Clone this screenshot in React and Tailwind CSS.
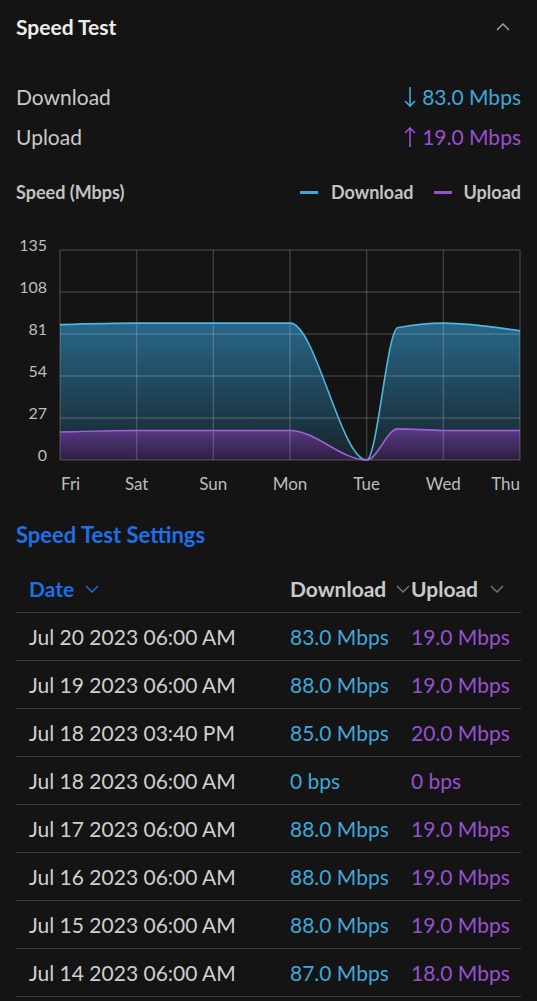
import React from "react";

const DAY = (520 - 60) / 6;
const xAt = (d) => 60 + d * DAY;
const yAt = (v) => 460 - v * (210 / 135);

const down = [[0, 87], [1, 88], [2, 88], [3, 88], [4, 0], [4.403, 85], [5, 88], [6, 83]];
const up = [[0, 18], [1, 19], [2, 19], [3, 19], [4, 0], [4.403, 20], [5, 19], [6, 19]];

function monotone(data) {
  const p = data.map(([d, v]) => [xAt(d), yAt(v)]);
  const n = p.length;
  const sign = (x) => (x < 0 ? -1 : 1);
  const t = new Array(n).fill(0);
  for (let i = 1; i < n - 1; i++) {
    const h0 = p[i][0] - p[i - 1][0];
    const h1 = p[i + 1][0] - p[i][0];
    const s0 = (p[i][1] - p[i - 1][1]) / h0;
    const s1 = (p[i + 1][1] - p[i][1]) / h1;
    const pp = (s0 * h1 + s1 * h0) / (h0 + h1);
    t[i] = (sign(s0) + sign(s1)) * Math.min(Math.abs(s0), Math.abs(s1), 0.5 * Math.abs(pp)) || 0;
  }
  const h0 = p[1][0] - p[0][0];
  t[0] = (3 * (p[1][1] - p[0][1]) / h0 - t[1]) / 2;
  const hn = p[n - 1][0] - p[n - 2][0];
  t[n - 1] = (3 * (p[n - 1][1] - p[n - 2][1]) / hn - t[n - 2]) / 2;
  let d = `M${p[0][0]},${p[0][1]}`;
  for (let i = 0; i < n - 1; i++) {
    const dx = (p[i + 1][0] - p[i][0]) / 3;
    d += ` C${p[i][0] + dx},${p[i][1] + dx * t[i]} ${p[i + 1][0] - dx},${p[i + 1][1] - dx * t[i + 1]} ${p[i + 1][0]},${p[i + 1][1]}`;
  }
  return d;
}

const downLine = monotone(down);
const upLine = monotone(up);
const downArea = `${downLine} L520,460 L60,460 Z`;
const upArea = `${upLine} L520,460 L60,460 Z`;

const rows = [
  ["Jul 20 2023 06:00 AM", "83.0 Mbps", "19.0 Mbps"],
  ["Jul 19 2023 06:00 AM", "88.0 Mbps", "19.0 Mbps"],
  ["Jul 18 2023 03:40 PM", "85.0 Mbps", "20.0 Mbps"],
  ["Jul 18 2023 06:00 AM", "0 bps", "0 bps"],
  ["Jul 17 2023 06:00 AM", "88.0 Mbps", "19.0 Mbps"],
  ["Jul 16 2023 06:00 AM", "88.0 Mbps", "19.0 Mbps"],
  ["Jul 15 2023 06:00 AM", "88.0 Mbps", "19.0 Mbps"],
  ["Jul 14 2023 06:00 AM", "87.0 Mbps", "18.0 Mbps"],
];

function Chevron({ className, up: isUp }) {
  return (
    <svg width="14" height="8" viewBox="0 0 14 8" className={className} fill="none">
      <path d={isUp ? "M1 7 L7 1 L13 7" : "M1 1 L7 7 L13 1"} stroke="currentColor" strokeWidth="1.3" />
    </svg>
  );
}

function Arrow({ down: isDown }) {
  return (
    <svg width="12" height="22" viewBox="0 0 12 22" fill="none" className="mr-[6px]">
      {isDown ? (
        <path d="M6 1 V20 M1 15 L6 20 L11 15" stroke="currentColor" strokeWidth="1.6" />
      ) : (
        <path d="M6 21 V2 M1 7 L6 2 L11 7" stroke="currentColor" strokeWidth="1.6" />
      )}
    </svg>
  );
}

function Chart() {
  const gridY = [250, 292, 334, 376, 418, 460];
  const yLabels = ["135", "108", "81", "54", "27", "0"];
  const days = ["Fri", "Sat", "Sun", "Mon", "Tue", "Wed", "Thu"];
  return (
    <svg width="537" height="270" viewBox="0 230 537 270" className="block">
      <defs>
        <linearGradient id="gd" gradientUnits="userSpaceOnUse" x1="0" y1="320" x2="0" y2="460">
          <stop offset="0" stopColor="#28688a" />
          <stop offset="1" stopColor="#18242b" />
        </linearGradient>
        <linearGradient id="gu" gradientUnits="userSpaceOnUse" x1="0" y1="428" x2="0" y2="460">
          <stop offset="0" stopColor="#5b3a8a" />
          <stop offset="1" stopColor="#2c1f3e" />
        </linearGradient>
      </defs>
      <path d={downArea} fill="url(#gd)" />
      <path d={upArea} fill="url(#gu)" />
      {gridY.map((y) => (
        <line key={y} x1="60" x2="520" y1={y} y2={y} stroke="rgba(255,255,255,0.17)" strokeWidth="1.5" />
      ))}
      {days.map((_, i) => (
        <line key={i} x1={xAt(i)} x2={xAt(i)} y1="250" y2="460" stroke="rgba(255,255,255,0.17)" strokeWidth="1.5" />
      ))}
      <path d={downLine} fill="none" stroke="#4fb6e0" strokeWidth="1.6" />
      <path d={upLine} fill="none" stroke="#a25fda" strokeWidth="1.6" />
      {yLabels.map((l, i) => (
        <text key={l} x="47" y={gridY[i] + 1} textAnchor="end" fill="#bdbdbd" fontSize="16" fontFamily="Lato, sans-serif">
          {l}
        </text>
      ))}
      {days.map((d, i) => (
        <text
          key={d}
          x={i === 0 ? 61 : i === 6 ? 520 : xAt(i)}
          y="490"
          textAnchor={i === 0 ? "start" : i === 6 ? "end" : "middle"}
          fill="#bdbdbd"
          fontSize="17"
          fontFamily="Lato, sans-serif"
        >
          {d}
        </text>
      ))}
    </svg>
  );
}

export default function App() {
  return (
    <div className="min-h-screen w-full bg-[#141414] text-[#c9c9c9]" style={{ fontFamily: "Lato, 'Noto Sans', sans-serif" }}>
      <div className="flex h-[54px] items-center justify-between px-4">
        <span className="text-[21px] font-bold text-[#ececec]">Speed Test</span>
        <Chevron up className="mr-[11px] text-[#a8a8a8]" />
      </div>

      <div className="mt-[23px] px-4">
        <div className="flex h-[40px] items-center justify-between text-[21px]">
          <span>Download</span>
          <span className="flex items-center text-[#3fa7da]">
            <Arrow down />
            83.0 Mbps
          </span>
        </div>
        <div className="flex h-[40px] items-center justify-between text-[21px]">
          <span>Upload</span>
          <span className="flex items-center text-[#9a4fd2]">
            <Arrow />
            19.0 Mbps
          </span>
        </div>
      </div>

      <div className="mt-[23px] flex h-[24px] items-center justify-between px-4 text-[18px] font-bold text-[#c3c3c3]">
        <span>Speed (Mbps)</span>
        <div className="flex items-center">
          <span className="mr-[13px] h-[3px] w-[18px] bg-[#3fa7da]" />
          <span>Download</span>
          <span className="ml-[20px] mr-[12px] h-[3px] w-[18px] bg-[#9a4fd2]" />
          <span>Upload</span>
        </div>
      </div>

      <div className="mt-[26px]">
        <Chart />
      </div>

      <div className="mt-[20px] flex h-[28px] items-center px-4 text-[22px] font-bold text-[#1f6fe6]">
        Speed Test Settings
      </div>

      <div className="mx-4 mt-[17px]">
        <div className="grid h-[48px] grid-cols-[274px_121px_1fr] items-center border-b border-[#3a3a3a] text-[21px] font-bold">
          <div className="flex items-center pl-[13px] text-[#1f6fe6]">
            <span>Date</span>
            <Chevron className="ml-[11px]" />
          </div>
          <div className="flex items-center text-[#c9c9c9]">
            <span>Download</span>
            <Chevron className="ml-[10px] text-[#7a7a7a]" />
          </div>
          <div className="flex items-center text-[#c9c9c9]">
            <span>Upload</span>
            <Chevron className="ml-[12px] text-[#7a7a7a]" />
          </div>
        </div>
        {rows.map((r, i) => (
          <div key={i} className="grid h-[48px] grid-cols-[274px_121px_1fr] items-center border-b border-[#3a3a3a] text-[21px]">
            <div className="pl-[13px] text-[#cfcfcf]">{r[0]}</div>
            <div className="text-[#3fa7da]">{r[1]}</div>
            <div className="text-[#9a4fd2]">{r[2]}</div>
          </div>
        ))}
      </div>
    </div>
  );
}
